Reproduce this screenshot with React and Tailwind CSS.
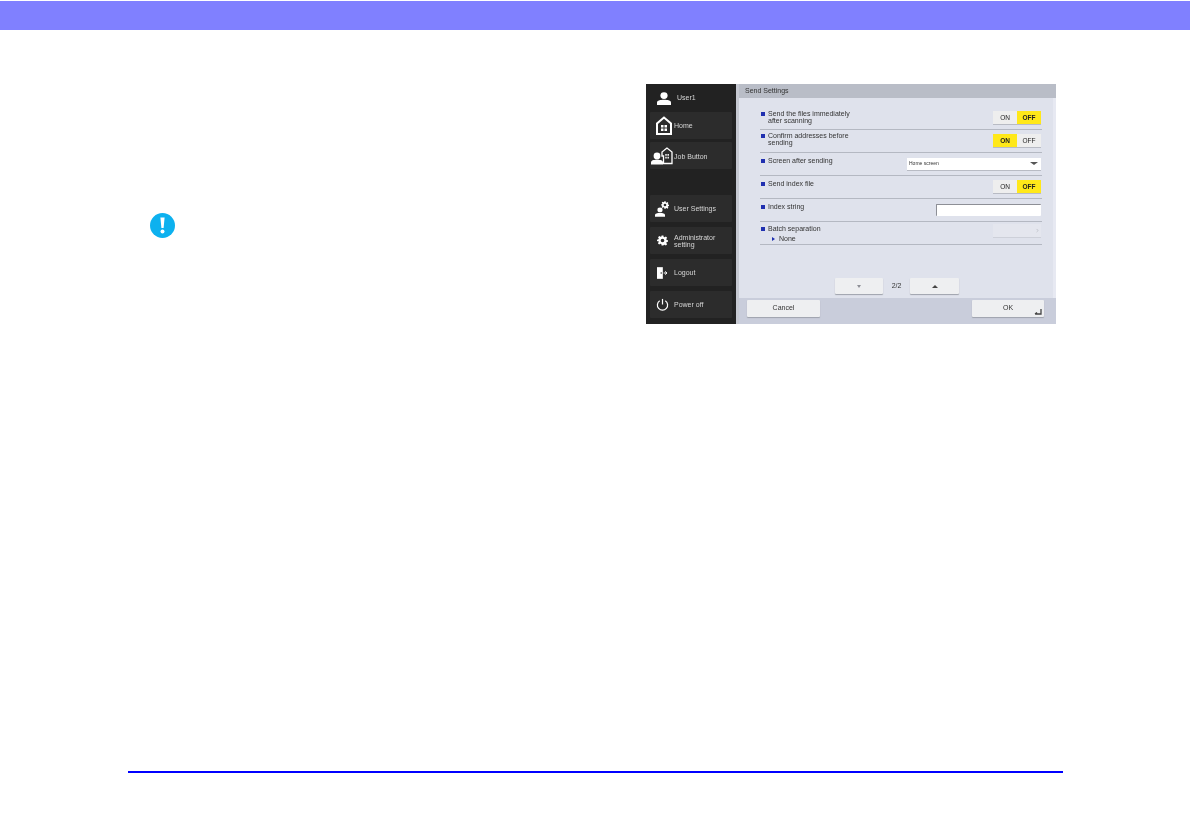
import React from 'react';
import { ChevronRight } from 'lucide-react';

const UserGlyph = ({ className = '' }) => (
  <svg viewBox="0 0 14 13" className={className} fill="#fff">
    <ellipse cx="7" cy="3.600" rx="3.600" ry="3.400" />
    <path d="M0 13v-2.400C0 8.600 3 7.800 7 7.800s7 .8 7 2.800V13z" />
  </svg>
);

const HouseGlyph = ({ className = '' }) => (
  <svg viewBox="0 0 16 19" className={className}>
    <path d="M8 1.500 1 7.500V18h14V7.500z" fill="none" stroke="#fff" strokeWidth="2" />
    <path d="M5 9h2.500v2.500H5zM8.500 9H11v2.500H8.500zM5 12.500h2.500V15H5zM8.500 12.500H11V15H8.500z" fill="#fff" />
  </svg>
);

const JobGlyph = () => (
  <svg viewBox="0 0 22 18" className="w-[22px] h-[18px]">
    <circle cx="6" cy="9" r="3.400" fill="#fff" />
    <path d="M0 17.500v-2C0 13.500 2.400 12.800 6 12.800s6 .7 6 2.700v2z" fill="#fff" />
    <path d="M16 1l-5 4v4h1.500v7.500H21V5z" fill="none" stroke="#fff" strokeWidth="1.300" />
    <path d="M14.300 7h1.400v1.800h-1.400zM16.500 7h1.400v1.800h-1.400zM14.300 9.800h1.400v1.800h-1.400zM16.500 9.800h1.400v1.800h-1.400z" fill="#fff" />
  </svg>
);

const GearGlyph = ({ className = '' }) => (
  <svg viewBox="0 0 24 24" className={className} fill="#fff">
    <path fillRule="evenodd" d="M10 1h4l.6 3.200 2 .8 2.700-1.800 2.800 2.800-1.800 2.700.8 2 3.200.6v3.400l-3.200.7-.8 2 1.800 2.700-2.800 2.800-2.700-1.800-2 .8L14 23h-4l-.6-3.200-2-.8-2.700 1.800-2.800-2.800 1.800-2.700-.8-2L0 13.600V10.200l3.200-.7.8-2L2.200 4.800 5 2l2.700 1.800 2-.8zM12 8a4 4 0 1 0 0 8 4 4 0 0 0 0-8z" />
  </svg>
);

const UserSettingsGlyph = () => (
  <span className="relative block w-[14px] h-[16px]">
    <UserGlyph className="absolute left-0 bottom-0 w-[10px] h-[10px]" />
    <GearGlyph className="absolute right-0 top-0 w-[8px] h-[8px]" />
  </span>
);

const LogoutGlyph = () => (
  <svg viewBox="0 0 12 14" className="w-[10px] h-[12px]">
    <path d="M0 0h7v14H0z" fill="#fff" />
    <path d="M8 7h3.500M10 5l1.800 2L10 9" fill="none" stroke="#fff" strokeWidth="1.200" />
    <circle cx="5" cy="7" r=".9" fill="#222" />
  </svg>
);

const PowerGlyph = () => (
  <svg viewBox="0 0 14 14" className="w-[13px] h-[13px]" fill="none" stroke="#fff" strokeWidth="1.300">
    <path d="M4 3a5.500 5.500 0 1 0 6 0" />
    <path d="M7 1v6" />
  </svg>
);

const NavButton = ({ icon, className = '', children }) => (
  <div className={`flex items-center h-[27px] bg-[#2c2c2c] text-[#d6d6d6] rounded-[1px] ${className}`}>
    <span className="w-[24px] flex justify-center shrink-0">{icon}</span>
    <span className="leading-[7px]">{children}</span>
  </div>
);

const Toggle = ({ on }) => (
  <div className="flex w-[48px] h-[13px] text-[6.5px] text-[#222] shadow-[0_1px_0_#b8bbc4]">
    <span className={`flex-1 flex items-center justify-center ${on ? 'bg-[#ffe819] font-bold' : 'bg-[#eeeeee]'}`}>ON</span>
    <span className={`flex-1 flex items-center justify-center ${on ? 'bg-[#eeeeee]' : 'bg-[#ffe819] font-bold'}`}>OFF</span>
  </div>
);

const Row = ({ label, sub, top = 'pt-[4px]', children }) => (
  <div className="flex h-[23px] border-b border-[#b4b8c2] pr-px">
    <div className={`flex-1 flex ${top}`}>
      <span className="w-[4px] h-[4px] bg-[#2030b0] mt-[2px] ml-px mr-[3px] shrink-0" />
      <div className="leading-[7px] text-[#333]">
        {label.map((line) => <div key={line}>{line}</div>)}
        {sub && (
          <div className="flex items-center mt-[3px] ml-[4px]">
            <span className="w-0 h-0 border-y-[2px] border-y-transparent border-l-[3px] border-l-[#2030b0] mr-[4px]" />
            {sub}
          </div>
        )}
      </div>
    </div>
    <div className="flex items-center pb-[1px]">{children}</div>
  </div>
);

const FlatButton = ({ className = '', children }) => (
  <div className={`flex items-center justify-center bg-[#eeeff1] rounded-[1px] shadow-[0_1px_1px_#9ea2ac] text-[#333] ${className}`}>
    {children}
  </div>
);

const App = () => {
  return (
    <div className="w-[1190px] h-[840px] bg-white flex flex-col font-['Liberation_Sans',sans-serif]">
      <div className="h-[29px] mt-px bg-[#8080ff] shrink-0" />

      <div className="flex pt-[54px] pl-[150px]">
        <div className="w-[496px] pt-[129px]">
          <svg viewBox="0 0 25 25" className="w-[25px] h-[25px]">
            <circle cx="12.500" cy="12.500" r="12.500" fill="#0db1ef" />
            <path d="M10.400 4.500h4.200l-1 10.500h-2.200z" fill="#fff" />
            <circle cx="12.500" cy="18.500" r="2" fill="#fff" />
          </svg>
        </div>

        <div className="w-[410px] h-[240px] flex text-[7px] [will-change:transform]">
          <div className="w-[90px] bg-[#222222] px-[4px] flex flex-col">
            <div className="flex items-center h-[26px] text-[#d6d6d6] mb-[2px] pt-[2px] shrink-0">
              <span className="w-[27px] flex justify-center pl-[1px]"><UserGlyph className="w-[14px] h-[13px]" /></span>
              <span>User1</span>
            </div>
            <NavButton icon={<span className="pl-[3px]"><HouseGlyph className="w-[16px] h-[19px]" /></span>}>Home</NavButton>
            <NavButton icon={<JobGlyph />} className="mt-[3px] pt-[1px]">Job Button</NavButton>
            <NavButton icon={<UserSettingsGlyph />} className="mt-[26px]">User Settings</NavButton>
            <NavButton icon={<GearGlyph className="w-[11px] h-[11px]" />} className="mt-[5px]">
              <span className="block">Administrator</span>
              <span className="block">setting</span>
            </NavButton>
            <NavButton icon={<LogoutGlyph />} className="mt-[5px]">Logout</NavButton>
            <NavButton icon={<PowerGlyph />} className="mt-[5px]">Power off</NavButton>
          </div>

          <div className="w-[320px] flex flex-col border-l-[3px] border-[#c6c9d2] bg-[#dfe2ec]">
            <div className="h-[14px] bg-[#b9bdc7] pl-[6px] flex items-center text-[#333] shrink-0">Send Settings</div>
            <div className="flex-1 pl-[21px] pr-[11px] pt-[9px] border-r-[3px] border-[#e7e9f2]">
              <Row label={['Send the files immediately', 'after scanning']} top="pt-[3px]"><Toggle on={false} /></Row>
              <Row label={['Confirm addresses before', 'sending']} top="pt-[2px]"><Toggle on /></Row>
              <Row label={['Screen after sending']}>
                <div className="w-[134px] h-[12px] bg-white flex items-center justify-between pl-[2px] pr-[3px] text-[5px] text-[#333] shadow-[0_1px_0_#b8bbc4]">
                  Home screen
                  <span className="w-0 h-0 border-x-[4px] border-x-transparent border-t-[3px] border-t-[#555]" />
                </div>
              </Row>
              <Row label={['Send index file']}><Toggle on={false} /></Row>
              <Row label={['Index string']}>
                <div className="w-[105px] h-[12px] bg-white rounded-[1px] border-t border-l border-[#8d8f96]" />
              </Row>
              <Row label={['Batch separation']} sub="None" top="pt-[3px]">
                <div className="w-[48px] h-[13px] bg-[#e4e6ee] flex items-center justify-end pr-[1px] shadow-[0_1px_0_#cdd0d9] mb-[4px]">
                  <ChevronRight size={5} color="#9a9da6" />
                </div>
              </Row>
              <div className="flex items-center mt-[33px] ml-[75px]">
                <FlatButton className="w-[48px] h-[16px]">
                  <span className="w-0 h-0 border-x-[2.500px] border-x-transparent border-t-[3px] border-t-[#8d8f96]" />
                </FlatButton>
                <span className="w-[27px] text-center text-[#333]">2/2</span>
                <FlatButton className="w-[49px] h-[16px]">
                  <span className="w-0 h-0 border-x-[3px] border-x-transparent border-b-[3px] border-b-[#444]" />
                </FlatButton>
              </div>
            </div>
            <div className="h-[26px] bg-[#c9cddb] flex items-start justify-between pt-[2px] pl-[8px] pr-[12px] shrink-0">
              <FlatButton className="w-[73px] h-[17px]">Cancel</FlatButton>
              <FlatButton className="w-[72px] h-[17px] relative">
                OK
                <svg viewBox="0 0 8 6" className="absolute right-[2px] bottom-[2px] w-[8px] h-[6px]" fill="none" stroke="#444" strokeWidth="1.300">
                  <path d="M7 0v5H1M3 3.500 1 5" />
                </svg>
              </FlatButton>
            </div>
          </div>
        </div>
      </div>

      <div className="mt-auto mb-[67px] ml-[128px] w-[935px] h-[2px] bg-[#0000ff] shrink-0" />
    </div>
  );
};

export default App;
